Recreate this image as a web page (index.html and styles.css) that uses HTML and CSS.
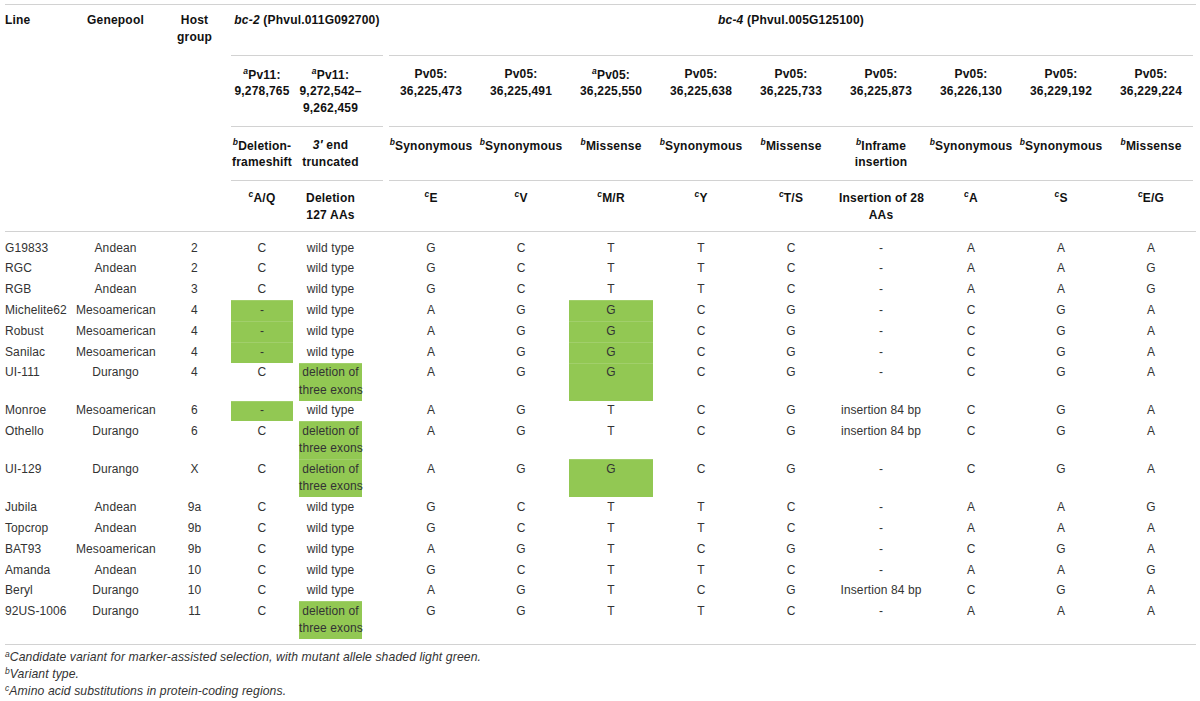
FILE: index.html
```html
<!DOCTYPE html>
<html lang="en">
<head>
<meta charset="utf-8">
<title>bc-2 and bc-4 variants</title>
<link rel="stylesheet" href="styles.css">
</head>
<body>
<div class="page">
  <div class="tbl">
    <table>
      <colgroup>
        <col class="w-line"><col class="w-gp"><col class="w-hg"><col class="w-v2a"><col class="w-v2b"><col class="w-v4" span="9">
      </colgroup>
      <thead>
        <tr class="h1">
          <th rowspan="4" class="ln">Line</th>
          <th rowspan="4">Genepool</th>
          <th rowspan="4" class="hg">Host<br>group</th>
          <th colspan="2" class="grp gse"><i>bc-2</i> (Phvul.011G092700)</th>
          <th colspan="9" class="grp gse"><i>bc-4</i> (Phvul.005G125100)</th>
        </tr>
        <tr class="hs">
          <th class="gs"><sup>a</sup>Pv11:<br>9,278,765</th>
          <th class="ge b2"><sup>a</sup>Pv11:<br>9,272,542–<br>9,262,459</th>
          <th class="gs">Pv05:<br>36,225,473</th>
          <th>Pv05:<br>36,225,491</th>
          <th><sup>a</sup>Pv05:<br>36,225,550</th>
          <th>Pv05:<br>36,225,638</th>
          <th>Pv05:<br>36,225,733</th>
          <th>Pv05:<br>36,225,873</th>
          <th>Pv05:<br>36,226,130</th>
          <th>Pv05:<br>36,229,192</th>
          <th class="ge">Pv05:<br>36,229,224</th>
        </tr>
        <tr class="hs">
          <th class="gs"><sup>b</sup>Deletion-<br>frameshift</th>
          <th class="ge b2"><i>3′</i> end<br>truncated</th>
          <th class="gs"><sup>b</sup>Synonymous</th>
          <th><sup>b</sup>Synonymous</th>
          <th><sup>b</sup>Missense</th>
          <th><sup>b</sup>Synonymous</th>
          <th><sup>b</sup>Missense</th>
          <th><sup>b</sup>Inframe<br>insertion</th>
          <th><sup>b</sup>Synonymous</th>
          <th><sup>b</sup>Synonymous</th>
          <th class="ge"><sup>b</sup>Missense</th>
        </tr>
        <tr class="hs h4">
          <th><sup>c</sup>A/Q</th>
          <th class="b2">Deletion<br>127 AAs</th>
          <th><sup>c</sup>E</th>
          <th><sup>c</sup>V</th>
          <th><sup>c</sup>M/R</th>
          <th><sup>c</sup>Y</th>
          <th><sup>c</sup>T/S</th>
          <th>Insertion of 28<br>AAs</th>
          <th><sup>c</sup>A</th>
          <th><sup>c</sup>S</th>
          <th><sup>c</sup>E/G</th>
        </tr>
      </thead>
      <tbody>
        <tr><td class="ln">G19833</td><td>Andean</td><td class="hg">2</td><td>C</td><td class="b2">wild type</td><td>G</td><td>C</td><td>T</td><td>T</td><td>C</td><td>-</td><td>A</td><td>A</td><td>A</td></tr>
        <tr><td class="ln">RGC</td><td>Andean</td><td class="hg">2</td><td>C</td><td class="b2">wild type</td><td>G</td><td>C</td><td>T</td><td>T</td><td>C</td><td>-</td><td>A</td><td>A</td><td>G</td></tr>
        <tr><td class="ln">RGB</td><td>Andean</td><td class="hg">3</td><td>C</td><td class="b2">wild type</td><td>G</td><td>C</td><td>T</td><td>T</td><td>C</td><td>-</td><td>A</td><td>A</td><td>G</td></tr>
        <tr><td class="ln">Michelite62</td><td>Mesoamerican</td><td class="hg">4</td><td class="g">-</td><td class="b2">wild type</td><td>A</td><td>G</td><td class="g">G</td><td>C</td><td>G</td><td>-</td><td>C</td><td>G</td><td>A</td></tr>
        <tr><td class="ln">Robust</td><td>Mesoamerican</td><td class="hg">4</td><td class="g">-</td><td class="b2">wild type</td><td>A</td><td>G</td><td class="g">G</td><td>C</td><td>G</td><td>-</td><td>C</td><td>G</td><td>A</td></tr>
        <tr><td class="ln">Sanilac</td><td>Mesoamerican</td><td class="hg">4</td><td class="g">-</td><td class="b2">wild type</td><td>A</td><td>G</td><td class="g">G</td><td>C</td><td>G</td><td>-</td><td>C</td><td>G</td><td>A</td></tr>
        <tr><td class="ln">UI-111</td><td>Durango</td><td class="hg">4</td><td>C</td><td class="b2 g">deletion of<br>three exons</td><td>A</td><td>G</td><td class="g">G</td><td>C</td><td>G</td><td>-</td><td>C</td><td>G</td><td>A</td></tr>
        <tr><td class="ln">Monroe</td><td>Mesoamerican</td><td class="hg">6</td><td class="g">-</td><td class="b2">wild type</td><td>A</td><td>G</td><td>T</td><td>C</td><td>G</td><td>insertion 84 bp</td><td>C</td><td>G</td><td>A</td></tr>
        <tr><td class="ln">Othello</td><td>Durango</td><td class="hg">6</td><td>C</td><td class="b2 g">deletion of<br>three exons</td><td>A</td><td>G</td><td>T</td><td>C</td><td>G</td><td>insertion 84 bp</td><td>C</td><td>G</td><td>A</td></tr>
        <tr><td class="ln">UI-129</td><td>Durango</td><td class="hg">X</td><td>C</td><td class="b2 g">deletion of<br>three exons</td><td>A</td><td>G</td><td class="g">G</td><td>C</td><td>G</td><td>-</td><td>C</td><td>G</td><td>A</td></tr>
        <tr><td class="ln">Jubila</td><td>Andean</td><td class="hg">9a</td><td>C</td><td class="b2">wild type</td><td>G</td><td>C</td><td>T</td><td>T</td><td>C</td><td>-</td><td>A</td><td>A</td><td>G</td></tr>
        <tr><td class="ln">Topcrop</td><td>Andean</td><td class="hg">9b</td><td>C</td><td class="b2">wild type</td><td>G</td><td>C</td><td>T</td><td>T</td><td>C</td><td>-</td><td>A</td><td>A</td><td>A</td></tr>
        <tr><td class="ln">BAT93</td><td>Mesoamerican</td><td class="hg">9b</td><td>C</td><td class="b2">wild type</td><td>A</td><td>G</td><td>T</td><td>C</td><td>G</td><td>-</td><td>C</td><td>G</td><td>A</td></tr>
        <tr><td class="ln">Amanda</td><td>Andean</td><td class="hg">10</td><td>C</td><td class="b2">wild type</td><td>G</td><td>C</td><td>T</td><td>T</td><td>C</td><td>-</td><td>A</td><td>A</td><td>G</td></tr>
        <tr><td class="ln">Beryl</td><td>Durango</td><td class="hg">10</td><td>C</td><td class="b2">wild type</td><td>A</td><td>G</td><td>T</td><td>C</td><td>G</td><td>Insertion 84 bp</td><td>C</td><td>G</td><td>A</td></tr>
        <tr><td class="ln">92US-1006</td><td>Durango</td><td class="hg">11</td><td>C</td><td class="b2 g">deletion of<br>three exons</td><td>G</td><td>G</td><td>T</td><td>T</td><td>C</td><td>-</td><td>A</td><td>A</td><td>A</td></tr>
      </tbody>
    </table>
  </div>
  <div class="notes">
    <p><sup>a</sup>Candidate variant for marker-assisted selection, with mutant allele shaded light green.</p>
    <p><sup>b</sup>Variant type.</p>
    <p><sup>c</sup>Amino acid substitutions in protein-coding regions.</p>
  </div>
</div>
</body>
</html>
```

FILE: styles.css
```css
html, body {
  margin: 0;
  padding: 0;
  background: #ffffff;
}

body {
  font-family: "Liberation Sans", Arial, sans-serif;
  font-size: 12px;
  color: #333333;
}

.page {
  padding: 4px 4px 0 5px;
}

.tbl {
  border-top: 1px solid #d2d2d2;
  border-bottom: 1px solid #d2d2d2;
  padding-bottom: 5px;
}

table {
  width: 1191px;
  table-layout: fixed;
  border-collapse: separate;
  border-spacing: 0;
}

.w-line { width: 68px; }
.w-gp   { width: 85px; }
.w-hg   { width: 70px; }
.w-v2a  { width: 68px; }
.w-v2b  { width: 90px; }
.w-v4   { width: 90px; }

th, td {
  white-space: nowrap;
  vertical-align: top;
  text-align: center;
}

/* header */
th {
  color: #111111;
  font-weight: bold;
  letter-spacing: 0.2px;
  line-height: 17px;
  padding: 6.5px 3px 10px;
  background-image: linear-gradient(#d2d2d2, #d2d2d2);
  background-repeat: no-repeat;
  background-size: 100% 1px;
  background-position: left bottom;
}

tr.hs th {
  vertical-align: baseline;
}

tr.h4 th {
  padding-top: 4.5px;
  padding-bottom: 8.5px;
}

th.ln {
  text-align: left;
  padding-left: 0;
}

th.hg {
  padding-left: 6px;
}

th.grp {
  padding-bottom: 27.5px;
}

th.b2 {
  padding-right: 24px;
}

th.gs {
  background-size: calc(100% - 3px) 1px;
  background-position: right bottom;
}

th.ge {
  background-size: calc(100% - 3px) 1px;
  background-position: left bottom;
}

th.gse {
  background-size: calc(100% - 6px) 1px;
  background-position: center bottom;
}

th sup {
  font-size: 8.5px;
  font-style: italic;
  line-height: 17px;
  vertical-align: 4.7px;
}

/* body */
td {
  line-height: 17.2px;
  letter-spacing: 0.1px;
  padding: 1.8px 0;
  border-left: 3px solid transparent;
  border-right: 3px solid transparent;
  background-clip: padding-box;
}

td.ln {
  text-align: left;
  border-left-width: 0;
  border-right-width: 0;
}

td.hg {
  border-left-width: 6px;
}

td.b2 {
  border-right-width: 24px;
}

tbody tr:first-child td {
  padding-top: 7.5px;
}

td.g {
  background-color: #92c853;
  box-shadow: inset 0 1px 0 rgba(255, 255, 255, 0.14);
}

/* notes */
.notes {
  padding-top: 3.5px;
  font-style: italic;
  font-size: 12.2px;
  letter-spacing: 0.1px;
  line-height: 17.3px;
  color: #333333;
}

.notes p {
  margin: 0;
}

.notes sup {
  font-size: 8.5px;
  line-height: 0;
  vertical-align: 4px;
}
```
